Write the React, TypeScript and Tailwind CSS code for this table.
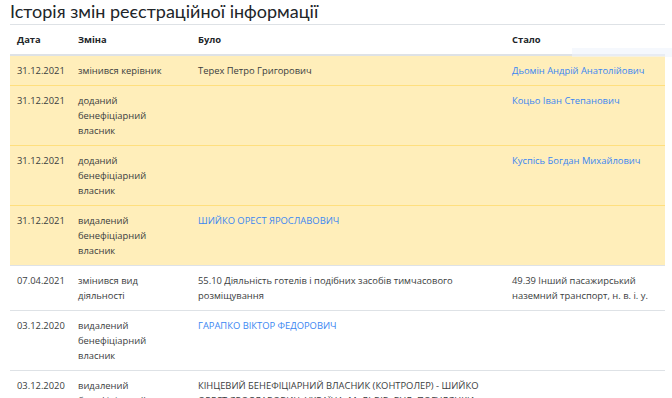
const rows = [
  { date: "31.12.2021", change: "змінився керівник", was: "Терех Петро Григорович", became: "Дьомін Андрій Анатолійович", becameLink: true, warn: true },
  { date: "31.12.2021", change: "доданий бенефіціарний власник", was: "", became: "Коцьо Іван Степанович", becameLink: true, warn: true },
  { date: "31.12.2021", change: "доданий бенефіціарний власник", was: "", became: "Куспісь Богдан Михайлович", becameLink: true, warn: true },
  { date: "31.12.2021", change: "видалений бенефіціарний власник", was: "ШИЙКО ОРЕСТ ЯРОСЛАВОВИЧ", wasLink: true, became: "", warn: true },
  { date: "07.04.2021", change: "змінився вид діяльності", was: "55.10 Діяльність готелів і подібних засобів тимчасового розміщування", became: "49.39 Інший пасажирський наземний транспорт, н. в. і. у." },
  { date: "03.12.2020", change: "видалений бенефіціарний власник", was: "ГАРАПКО ВІКТОР ФЕДОРОВИЧ", wasLink: true, became: "" },
  { date: "03.12.2020", change: "видалений бенефіціарний власник", was: "КІНЦЕВИЙ БЕНЕФІЦІАРНИЙ ВЛАСНИК (КОНТРОЛЕР) - ШИЙКО ОРЕСТ ЯРОСЛАВОВИЧ, УКРАЇНА, М. ЛЬВІВ, ВУЛ. ПОГУЛЯНКИ, БУД. 11", became: "" },
];

export default function App() {
  return (
    <div className="relative h-[398px] overflow-hidden bg-white px-[10px] pr-[7px] font-['Open_Sans',sans-serif] text-[#212529]">
      <h2 className="mb-[2px] font-['Lato',sans-serif] text-[18px] leading-[22px] font-normal">Історія змін реєстраційної інформації</h2>
      <table className="w-[655px] table-fixed text-[9.4px] leading-[15px]">
        <colgroup>
          <col className="w-[61px]" />
          <col className="w-[120px]" />
          <col className="w-[314px]" />
          <col className="w-[160px]" />
        </colgroup>
        <thead>
          <tr className="text-left">
            <th className="border-t border-b-2 border-[#dee2e6] px-[7px] py-[7px] font-bold">Дата</th>
            <th className="border-t border-b-2 border-[#dee2e6] px-[7px] py-[7px] font-bold">Зміна</th>
            <th className="border-t border-b-2 border-[#dee2e6] px-[7px] py-[7px] font-bold">Було</th>
            <th className="border-t border-b-2 border-[#dee2e6] px-[7px] py-[7px] font-bold">Стало</th>
          </tr>
        </thead>
        <tbody className="text-[#3a3d40]">
          {rows.map((r, i) => {
            const cell = r.warn
              ? "border-t border-[#ffdf7e] px-[7px] py-[7px] align-top"
              : "border-t border-[#dee2e6] px-[7px] py-[7px] align-top";
            return (
              <tr key={i} className={r.warn ? "bg-[#ffeeba]" : "bg-white"}>
                <td className={cell}>{r.date}</td>
                <td className={cell}>{r.change}</td>
                <td className={cell}>
                  {r.wasLink ? <a className="text-[#3a86f2]">{r.was}</a> : r.was}
                </td>
                <td className={cell}>
                  {r.becameLink ? <a className="text-[#3a86f2]">{r.became}</a> : r.became}
                </td>
              </tr>
            );
          })}
        </tbody>
      </table>
      <div className="absolute top-[48px] left-[572px] h-[9px] w-[100px] bg-[#eef3fc] opacity-60" />
    </div>
  );
}
